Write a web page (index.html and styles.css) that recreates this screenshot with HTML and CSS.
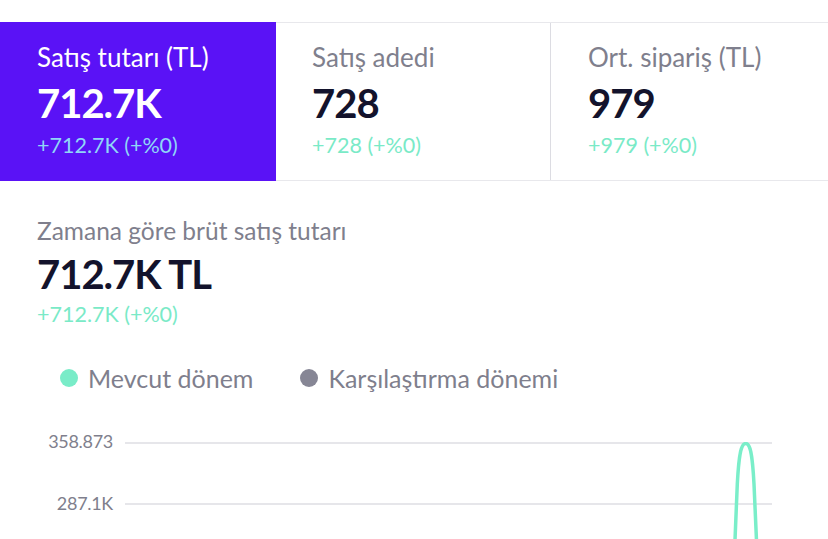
FILE: index.html
```html
<!DOCTYPE html>
<html lang="tr">
<head>
<meta charset="utf-8">
<link rel="stylesheet" href="styles.css">
</head>
<body>
<div class="kpis">
  <div class="kpi active">
    <div class="kpi-title">Satış tutarı (TL)</div>
    <div class="kpi-value">712.7K</div>
    <div class="kpi-change">+712.7K (+%0)</div>
  </div>
  <div class="kpi">
    <div class="kpi-title">Satış adedi</div>
    <div class="kpi-value">728</div>
    <div class="kpi-change">+728 (+%0)</div>
  </div>
  <div class="kpi last">
    <div class="kpi-title">Ort. sipariş (TL)</div>
    <div class="kpi-value">979</div>
    <div class="kpi-change">+979 (+%0)</div>
  </div>
</div>
<div class="section">
  <div class="sec-title">Zamana göre brüt satış tutarı</div>
  <div class="sec-value">712.7K TL</div>
  <div class="sec-change">+712.7K (+%0)</div>
  <div class="legend">
    <div class="legend-item"><span class="dot green"></span>Mevcut dönem</div>
    <div class="legend-item"><span class="dot gray"></span>Karşılaştırma dönemi</div>
  </div>
</div>
<div class="chart">
  <div class="ylabels">
    <div class="ylabel">358.873</div>
    <div class="ylabel">287.1K</div>
  </div>
  <svg class="plot" width="647" height="110" viewBox="0 0 647 110">
    <line x1="0" y1="1" x2="647" y2="1" stroke="#dedee3" stroke-width="1.5"/>
    <line x1="0" y1="62" x2="647" y2="62" stroke="#dedee3" stroke-width="1.5"/>
    <path d="M609.5 110 L612.3 42 C614 10 616.5 1.5 620.7 1.5 C625 1.5 627.3 10 629 42 L632 110" fill="none" stroke="#7aeec9" stroke-width="3.5"/>
  </svg>
</div>
</body>
</html>
```
FILE: styles.css
```css
html, body {
  margin: 0;
  padding: 0;
  background: #ffffff;
  font-family: "Lato", "Noto Sans", sans-serif;
  overflow: hidden;
}
.kpis {
  margin-top: 22px;
  display: grid;
  grid-template-columns: 276px 275px 277px;
  height: 159px;
  border-top: 1px solid #e8e8ec;
  border-bottom: 1px solid #e8e8ec;
  box-sizing: border-box;
}
.kpi {
  padding: 19px 0 0 36px;
  border-right: 1px solid #dcdce2;
}
.kpi.active {
  background: #5a12f6;
  padding-left: 37px;
  padding-top: 20px;
  border-right: none;
  margin-top: -1px;
  margin-bottom: -1px;
}
.kpi.last {
  border-right: none;
  padding-left: 37px;
}
.kpi-title {
  font-size: 26px;
  line-height: 30px;
  color: #7f7f8d;
}
.kpi-value {
  font-size: 40px;
  line-height: 46px;
  font-weight: 700;
  color: #13132c;
  letter-spacing: -1px;
  margin-top: 8px;
}
.kpi-change {
  font-size: 21.5px;
  line-height: 28px;
  color: #7aeac7;
  margin-top: 5px;
}
.active .kpi-title,
.active .kpi-value {
  color: #ffffff;
}
.active .kpi-change {
  color: #8fd6f7;
}
.section {
  padding: 36px 0 0 37px;
}
.sec-title {
  font-size: 24.5px;
  line-height: 28px;
  color: #7f7f8d;
}
.sec-value {
  font-size: 40px;
  line-height: 46px;
  font-weight: 700;
  color: #13132c;
  letter-spacing: -1px;
  margin-top: 6px;
}
.sec-change {
  font-size: 21.5px;
  line-height: 28px;
  color: #7aeac7;
  margin-top: 3px;
}
.legend {
  display: flex;
  gap: 47px;
  margin-top: 35px;
  padding-left: 23px;
}
.legend-item {
  display: flex;
  align-items: center;
  gap: 10px;
  font-size: 25px;
  color: #7f7f8d;
  line-height: 30px;
}
.dot {
  width: 18px;
  height: 18px;
  border-radius: 50%;
  display: inline-block;
}
.dot.green { background: #79ecc8; }
.dot.gray { background: #868695; }
.chart {
  display: flex;
  margin-top: 49px;
}
.ylabels {
  width: 113px;
  display: flex;
  flex-direction: column;
  align-items: flex-end;
  gap: 40px;
  margin-right: 12px;
  margin-top: -12px;
}
.ylabel {
  font-size: 18px;
  line-height: 22px;
  color: #7f7f8d;
  letter-spacing: -0.3px;
}
.plot {
  display: block;
}
```
